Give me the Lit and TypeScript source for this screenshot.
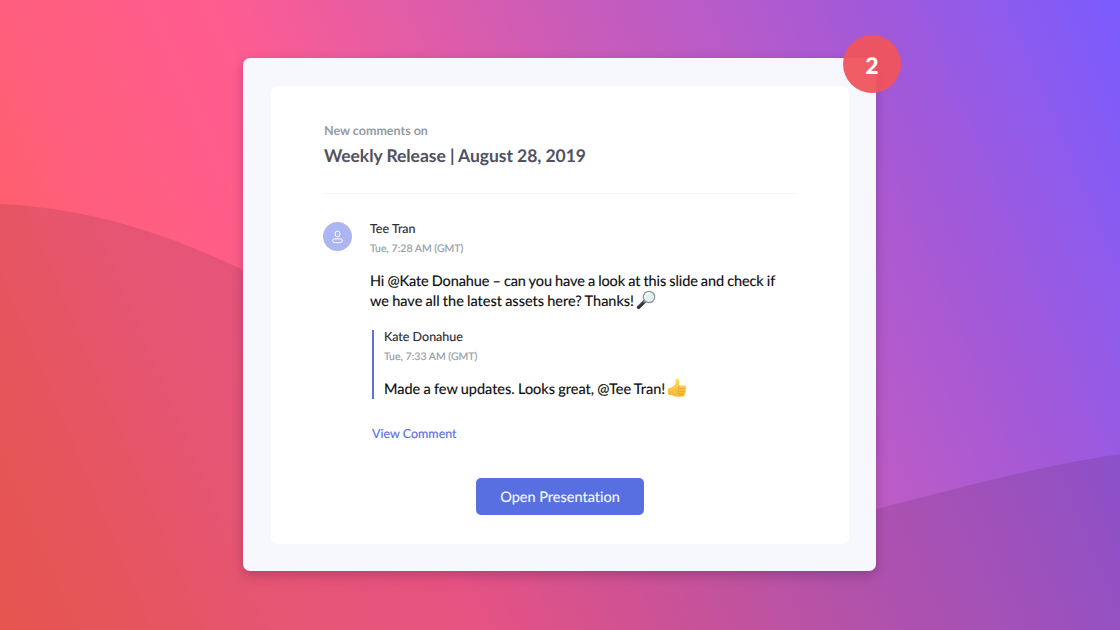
import { LitElement, html, css } from "lit";
import { customElement } from "lit/decorators.js";

const lens = html`<svg class="emoji lens" viewBox="0 0 20 20">
  <path d="M2.600 17.200 8.200 11.800" stroke="#2f3236" stroke-width="3.600" stroke-linecap="round"/>
  <path d="M2.200 16 7 11.400" stroke="#7b8187" stroke-width=".8" stroke-linecap="round"/>
  <path d="M7.400 12.400 9 10.900" stroke="#8c9196" stroke-width="1.800"/>
  <circle cx="13" cy="7" r="5.700" fill="#e3eef1" stroke="#8e9498" stroke-width="1.200"/>
  <path d="M9.200 6.600a3.900 3.900 0 0 1 3.400-3.400" fill="none" stroke="#fff" stroke-width="1.400" stroke-linecap="round"/>
</svg>`;

const thumb = html`<svg class="emoji thumb" viewBox="0 0 20 20">
  <defs><linearGradient id="skin" x1="0" y1="0" x2="0" y2="1">
    <stop offset="0" stop-color="#ffdc55"/><stop offset="1" stop-color="#f6b531"/></linearGradient></defs>
  <path fill="url(#skin)" d="M1.600 10.200C3.800 9.900 6 9 7.300 7.300 8.500 5.700 8.700 4.500 8.700 2.400c0-2.300 3.300-2.200 3.700.6.2 1.700-.2 3.300-.5 4.600h5.400c2 0 2.400 2.200 1 2.900 1.300.7 1.200 2.500-.2 3 .9.8.6 2.400-.7 2.700.5 1.100-.2 2.400-1.800 2.400-3.100.2-6.700.3-9.300-.9-1.400-.6-2.900-.6-4.600-.7C.4 15.600.4 11.700 1.600 10.200Z"/>
  <path fill="none" stroke="#d9922a" stroke-width=".5" stroke-linecap="round" d="M12.600 10.600h5.500M12.500 13.500h5.400M12.300 16.200h4.800M12.600 8.200c-1.500.6-1.700 1.900-.7 2.600-1.100.7-1.100 2.200 0 2.700-.9.700-.8 2.100.2 2.600"/>
</svg>`;

@customElement("app-root")
export class AppRoot extends LitElement {
  static styles = css`
    :host {
      display: block;
      width: 1120px;
      height: 630px;
      font-family: Lato, sans-serif;
      font-variant-ligatures: none;
      text-rendering: geometricPrecision;
    }
    * { box-sizing: border-box; }
    .stage {
      position: relative;
      display: grid;
      justify-content: start;
      padding: 58px 0 0 243px;
      width: 100%;
      height: 100%;
      overflow: hidden;
      background: linear-gradient(67deg, #ff5f55 0%, #ff5f66 10%, #ff5f7e 20%, #ff5c90 34.5%, #cb5cb8 59%, #b85bc9 70%, #a359d8 81%, #7a5cff 100%);
    }
    .waves { position: absolute; inset: 0; width: 100%; height: 100%; }
    .card {
      position: relative;
      width: 633px;
      height: 513px;
      padding: 28px 27px 27px 28px;
      border-radius: 7px;
      background: #f7f8fe;
      box-shadow: 0 4px 12px rgba(60, 10, 60, .28);
    }
    .badge {
      position: absolute;
      left: 600px;
      top: -23px;
      width: 58px;
      height: 58px;
      border-radius: 50%;
      display: flex;
      align-items: center;
      justify-content: center;
      padding-top: 2px;
      background: rgba(240, 83, 91, .94);
      color: #fff;
      font-size: 23px;
      font-weight: 900;
    }
    .sheet {
      height: 458px;
      padding: 36px 52px 0 52px;
      border-radius: 7px;
      background: #fff;
      display: flex;
      flex-direction: column;
    }
    .eyebrow { margin-left: 1px; font-size: 12.5px; line-height: 18px; font-weight: 700; color: #929ca5; }
    .title { margin: 4px 0 0 1px; font-size: 17.5px; line-height: 24px; font-weight: 700; letter-spacing: -.05px; color: #51525f; }
    .rule { margin-top: 25px; height: 1px; background: #f5f6f7; }
    .comment { display: flex; gap: 18px; margin-top: 28px; }
    .avatar {
      flex: none;
      width: 29px;
      height: 29px;
      border-radius: 50%;
      background: #acb6f0;
      display: flex;
      align-items: center;
      justify-content: center;
    }
    .avatar svg { width: 13px; height: 15px; }
    .body {
      display: flex;
      flex-direction: column;
      white-space: nowrap;
      margin-top: -1px;
      -webkit-text-stroke: .15px currentColor;
    }
    .name { font-size: 12.5px; line-height: 16px; color: #2b2c33; }
    .time { margin-top: 5px; font-size: 10.5px; line-height: 14px; color: #929ca5; }
    .text { margin-top: 16px; font-size: 14.5px; line-height: 20px; word-spacing: -.45px; color: #0c0c0e; }
    .tight { letter-spacing: -.1px; }
    .reply {
      margin: 18px 0 0 2px;
      padding-left: 10px;
      height: 69px;
      border-left: 2px solid #5b72df;
    }
    .reply .name { margin-top: -1px; }
    .emoji { display: inline-block; width: 20px; height: 20px; margin: -4px 0 -4px -1px; vertical-align: baseline; }
    .link { margin: 27px 0 0 2px; font-size: 12.5px; line-height: 16px; color: #5870df; }
    .button {
      align-self: center;
      margin: 36px 0 0 0;
      width: 168px;
      height: 37px;
      padding: 2px 0 0;
      border: 0;
      border-radius: 5px;
      background: #576fe0;
      color: #f4f6ff;
      font: 14.5px/35px Lato, sans-serif;
      font-variant-ligatures: none;
      text-rendering: geometricPrecision;
      -webkit-text-stroke: .15px currentColor;
    }
  `;

  render() {
    return html`
      <div class="stage">
        <svg class="waves" viewBox="0 0 1120 630">
          <path fill="#301020" fill-opacity=".12" d="M0 204C90 208 168 234 243 270L400 375C560 540 740 545 877 509C965 486 1040 466 1120 454V630H0Z"/>
        </svg>
        <div class="card">
          <div class="sheet">
            <div class="eyebrow">New comments on</div>
            <div class="title">Weekly Release | August 28, 2019</div>
            <div class="rule"></div>
            <div class="comment">
              <div class="avatar">
                <svg viewBox="0 0 13 15" fill="none" stroke="#fff" stroke-width="1">
                  <ellipse cx="6.5" cy="5" rx="2.400" ry="3"/>
                  <path d="M3.600 9.900h5.800c1.400 0 2.200.8 2.200 1.700 0 1.300-2 2.200-5.100 2.200s-5.100-.9-5.100-2.200c0-.9.800-1.700 2.200-1.700Z"/>
                </svg>
              </div>
              <div class="body">
                <div class="name">Tee Tran</div>
                <div class="time">Tue, 7:28 AM (GMT)</div>
                <div class="text"><span class="tight">Hi @Kate Donahue – can you have a look at this slide and check if</span><br>we have all the latest assets here? Thanks! ${lens}</div>
                <div class="reply">
                  <div class="name">Kate Donahue</div>
                  <div class="time">Tue, 7:33 AM (GMT)</div>
                  <div class="text">Made a few updates. Looks great, @Tee Tran! ${thumb}</div>
                </div>
                <div class="link">View Comment</div>
              </div>
            </div>
            <button class="button">Open Presentation</button>
          </div>
          <div class="badge">2</div>
        </div>
      </div>
    `;
  }
}
